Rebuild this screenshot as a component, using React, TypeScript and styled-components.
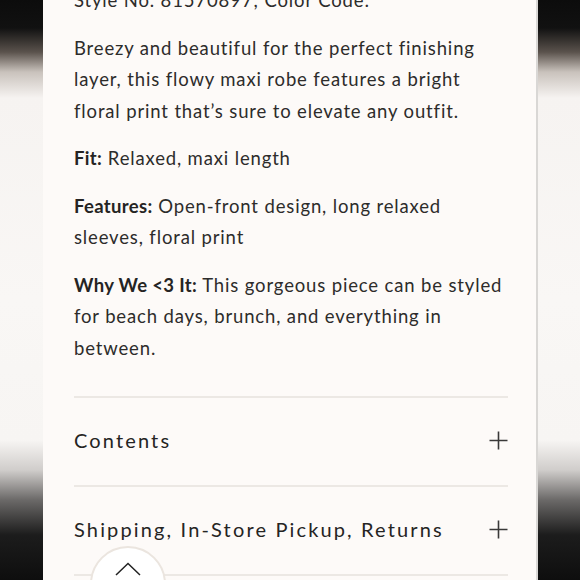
import React from "react";
import styled, { createGlobalStyle } from "styled-components";

const Global = createGlobalStyle`
  html, body { margin: 0; padding: 0; }
  body {
    width: 580px;
    height: 580px;
    overflow: hidden;
    background: linear-gradient(
      to bottom,
      #0c0c0c 0px,
      #111 28px,
      #5a524c 52px,
      #c9c2bc 72px,
      #f6f3f1 98px,
      #f9f7f5 300px,
      #f7f5f3 440px,
      #d0cdcb 470px,
      #6b6968 500px,
      #1c1c1c 535px,
      #0e0e0e 580px
    );
    font-family: Lato, "Open Sans", sans-serif;
  }
`;

const Page = styled.div`
  position: relative;
  width: 580px;
  height: 580px;
  overflow: hidden;
  display: flex;
  justify-content: flex-start;
`;

const Panel = styled.main`
  margin-left: 43px;
  width: 495px;
  height: 580px;
  box-sizing: border-box;
  background: #fdfaf8;
  border-right: 2px solid #d9d7d5;
  padding: 0 28px 0 31px;
  color: #2b2a29;
  overflow: hidden;
`;

const Description = styled.section`
  margin-top: -15px;
  display: flex;
  flex-direction: column;
  gap: 16px;
  padding-bottom: 32px;
  border-bottom: 2px solid #ece8e4;
`;

const Para = styled.p`
  margin: 0;
  font-size: 18.5px;
  line-height: 31.5px;
  letter-spacing: 0.85px;
  color: #2d2c2b;
`;

const Label = styled.strong`
  font-weight: 700;
  letter-spacing: 0.35px;
  color: #252423;
`;

const AccordionRow = styled.button`
  all: unset;
  box-sizing: border-box;
  width: 100%;
  height: 89px;
  padding-bottom: 3px;
  display: flex;
  align-items: center;
  justify-content: space-between;
  border-bottom: 2px solid #ece8e4;
  font-family: Lato, "Open Sans", sans-serif;
  font-size: 20px;
  letter-spacing: 2.15px;
  color: #252423;
`;

const Plus = styled.svg`
  width: 19px;
  height: 19px;
  flex-shrink: 0;
`;

const TopButton = styled.button`
  all: unset;
  position: absolute;
  left: 90px;
  top: 546px;
  width: 76px;
  height: 76px;
  border-radius: 50%;
  background: #ffffff;
  border: 2px solid #ebe5df;
  box-sizing: border-box;
  display: flex;
  justify-content: center;
  align-items: flex-start;
  padding-top: 14px;
`;

const PlusIcon = () => (
  <Plus viewBox="0 0 19 19">
    <path d="M9.5 0.5v18M0.5 9.5h18" stroke="#3a3938" strokeWidth="1.6" fill="none" />
  </Plus>
);

export default function App() {
  return (
    <>
      <Global />
      <Page>
        <Panel>
          <Description>
            <Para>Style No. 81570897; Color Code:</Para>
            <Para>
              Breezy and beautiful for the perfect finishing layer, this flowy maxi robe features a
              bright floral print that’s sure to elevate any outfit.
            </Para>
            <Para>
              <Label>Fit:</Label> Relaxed, maxi length
            </Para>
            <Para>
              <Label>Features:</Label> Open-front design, long relaxed sleeves, floral print
            </Para>
            <Para>
              <Label>Why We &lt;3 It:</Label> This gorgeous piece can be styled for beach days,
              brunch, and everything in between.
            </Para>
          </Description>
          <AccordionRow>
            Contents
            <PlusIcon />
          </AccordionRow>
          <AccordionRow>
            Shipping, In-Store Pickup, Returns
            <PlusIcon />
          </AccordionRow>
        </Panel>
        <TopButton aria-label="Back to top">
          <svg width="26" height="14" viewBox="0 0 26 14">
            <path d="M1 13L13 1.5L25 13" stroke="#222" strokeWidth="1.5" fill="none" />
          </svg>
        </TopButton>
      </Page>
    </>
  );
}
